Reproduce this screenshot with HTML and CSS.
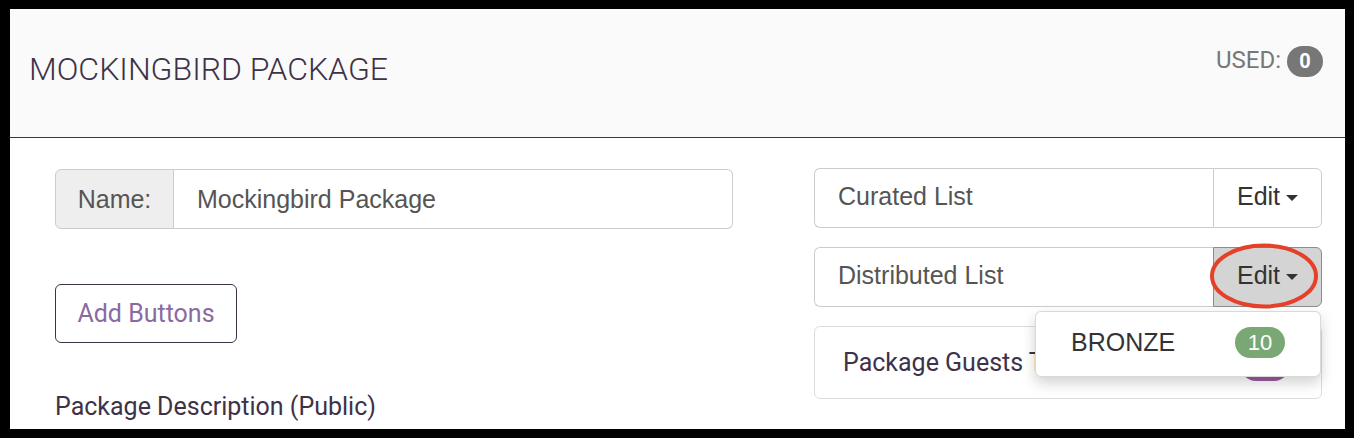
FILE: index.html
```html
<!DOCTYPE html>
<html lang="en">
<head>
  <meta charset="UTF-8">
  <title>Mockingbird Package</title>
  <link rel="stylesheet" href="styles.css">
</head>
<body>
  <div class="panel">
    <div class="panel-head">
      <h2 class="panel-title">MOCKINGBIRD PACKAGE</h2>
      <div class="used">USED: <span class="badge badge-gray">0</span></div>
    </div>

    <div class="panel-body">
      <div class="col-left">
        <div class="input-group">
          <span class="addon">Name:</span>
          <input type="text" class="field" value="Mockingbird Package">
        </div>

        <button class="btn-outline">Add Buttons</button>

        <div class="desc-label">Package Description (Public)</div>
      </div>

      <div class="col-right">
        <div class="input-group list-row">
          <span class="field list-name">Curated List</span>
          <button class="btn-edit">Edit <span class="caret"></span></button>
        </div>

        <div class="input-group list-row">
          <span class="field list-name">Distributed List</span>
          <button class="btn-edit active">Edit <span class="caret"></span></button>
          <!-- marcação vermelha em volta do botão -->
          <svg class="circle-mark" width="112" height="68" viewBox="0 0 112 68">
            <ellipse cx="56" cy="34" rx="52" ry="30.5" fill="none" stroke="#e5402a" stroke-width="4"/>
          </svg>
          <div class="dropdown-menu">
            <div class="dropdown-item">
              <span>BRONZE</span>
              <span class="badge badge-green">10</span>
            </div>
          </div>
        </div>

        <div class="guests-box">
          <span>Package Guests Total</span>
          <span class="badge badge-purple">10</span>
        </div>
      </div>
    </div>
  </div>
</body>
</html>
```

FILE: styles.css
```css
body {
  margin: 0;
  background-color: #000;
  padding: 9px 9px 9px 10px;
  font-family: Roboto, "Liberation Sans", sans-serif;
}
.panel {
  background-color: #fff;
  height: 420px;
  overflow: hidden;
}
.panel-head {
  background-color: #fafafa;
  height: 128px;
  border-bottom: 1px solid #3d3545;
  display: flex;
  justify-content: space-between;
  padding: 0 22px 0 19px;
}
.panel-title {
  margin: 0;
  padding-top: 41px;
  font-size: 32px;
  font-weight: 300;
  color: #3e3248;
  line-height: normal;
}
.used {
  padding-top: 36px;
  font-size: 24px;
  color: #777;
  display: flex;
  align-items: flex-start;
  gap: 6px;
  line-height: 30px;
}
.badge {
  display: inline-block;
  height: 31px;
  line-height: 31px;
  border-radius: 16px;
  text-align: center;
  color: #fff;
  box-sizing: border-box;
  font-family: "Liberation Sans", Arial, sans-serif;
  font-size: 22px;
}
.badge-gray {
  background-color: #777;
  width: 36px;
  height: 31px;
  margin-top: 1px;
  font-family: Roboto, sans-serif;
  font-weight: 700;
  font-size: 20px;
}
.badge-green {
  background-color: #7aa874;
  width: 50px;
}
.badge-purple {
  background-color: #9b5a9e;
  width: 50px;
  height: 32px;
  margin-top: 5px;
}
.panel-body {
  display: flex;
  padding: 30px 22px 0 45px;
  gap: 81px;
}
.col-left {
  width: 678px;
  padding-top: 1px;
}
.col-right {
  width: 508px;
  display: flex;
  flex-direction: column;
  gap: 19px;
}
.input-group {
  display: flex;
  height: 60px;
  position: relative;
}
.addon {
  width: 119px;
  box-sizing: border-box;
  background-color: #eee;
  border: 1px solid #ccc;
  border-radius: 6px 0 0 6px;
  display: flex;
  align-items: center;
  justify-content: center;
  font-family: "Liberation Sans", Arial, sans-serif;
  font-size: 25px;
  color: #555;
}
.field {
  flex: 1;
  box-sizing: border-box;
  border: 1px solid #ccc;
  border-left: none;
  border-radius: 0 6px 6px 0;
  padding: 0 23px;
  font-family: "Liberation Sans", Arial, sans-serif;
  font-size: 25px;
  color: #555;
  background: #fff;
  outline: none;
}
.list-name {
  border-left: 1px solid #ccc;
  border-right: none;
  border-radius: 6px 0 0 6px;
  display: flex;
  align-items: center;
  padding-bottom: 3px;
}
.btn-edit {
  width: 109px;
  box-sizing: border-box;
  border: 1px solid #ccc;
  border-radius: 0 6px 6px 0;
  background-color: #fff;
  color: #333;
  font-family: "Liberation Sans", Arial, sans-serif;
  font-size: 25px;
  display: flex;
  align-items: center;
  justify-content: center;
  gap: 6px;
  padding: 0 0 3px 0;
}
.btn-edit.active {
  background-color: #d4d4d4;
  border-color: #8c8c8c;
}
.caret {
  width: 0;
  height: 0;
  border-left: 6px solid transparent;
  border-right: 6px solid transparent;
  border-top: 6px solid #333;
  margin-top: 3px;
}
.btn-outline {
  display: block;
  margin-top: 55px;
  width: 182px;
  height: 59px;
  background: #fff;
  border: 1px solid #3e3248;
  border-radius: 6px;
  color: #8b6aa2;
  font-family: Roboto, sans-serif;
  font-size: 25px;
  padding: 0;
}
.desc-label {
  margin-top: 49px;
  font-size: 25px;
  color: #3e3248;
}
.guests-box {
  height: 73px;
  box-sizing: border-box;
  border: 1px solid #ddd;
  border-radius: 6px;
  display: flex;
  align-items: center;
  justify-content: space-between;
  padding: 0 31px 0 28px;
  font-size: 25px;
  color: #3e3248;
}
.circle-mark {
  position: absolute;
  right: 2px;
  top: -5px;
  z-index: 3;
}
.dropdown-menu {
  position: absolute;
  top: 64px;
  right: 1px;
  width: 286px;
  height: 66px;
  box-sizing: border-box;
  background: #fff;
  border: 1px solid rgba(0,0,0,0.15);
  border-radius: 6px;
  box-shadow: 0 6px 14px rgba(0,0,0,0.18);
  z-index: 2;
}
.dropdown-item {
  display: flex;
  align-items: center;
  justify-content: space-between;
  padding: 15px 35px 0 35px;
  font-family: "Liberation Sans", Arial, sans-serif;
  font-size: 25px;
  color: #333;
}
```
